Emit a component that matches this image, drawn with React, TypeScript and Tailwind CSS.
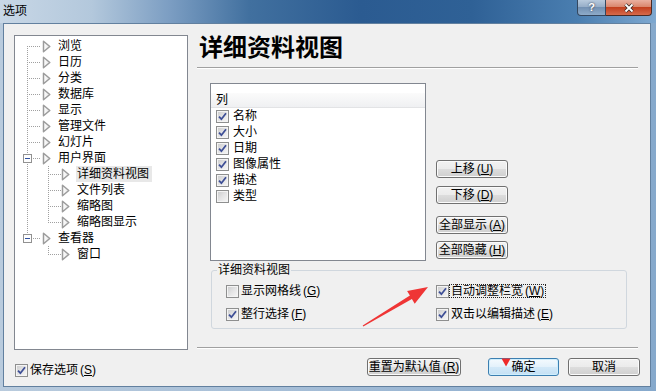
import React from "react";

type Row = {
  text: string;
  level: 0 | 1;
  v?: "full" | "bottom" | "top";
  expander?: boolean;
  rootLine?: boolean;
  child?: "full" | "top";
  selected?: boolean;
};

const rows: Row[] = [
  { text: "浏览", level: 0, v: "bottom" },
  { text: "日历", level: 0, v: "full" },
  { text: "分类", level: 0, v: "full" },
  { text: "数据库", level: 0, v: "full" },
  { text: "显示", level: 0, v: "full" },
  { text: "管理文件", level: 0, v: "full" },
  { text: "幻灯片", level: 0, v: "full" },
  { text: "用户界面", level: 0, v: "full", expander: true },
  { text: "详细资料视图", level: 1, rootLine: true, child: "full", selected: true },
  { text: "文件列表", level: 1, rootLine: true, child: "full" },
  { text: "缩略图", level: 1, rootLine: true, child: "full" },
  { text: "缩略图显示", level: 1, rootLine: true, child: "top" },
  { text: "查看器", level: 0, v: "top", expander: true },
  { text: "窗口", level: 1, rootLine: false, child: "top" },
];

const dot = { stroke: "#a0a0a0", strokeDasharray: "1 1", strokeWidth: 1 };

function VLine({ x, y1, y2 }: { x: number; y1: number; y2: number }) {
  return <line x1={x} x2={x} y1={y1} y2={y2} {...dot} />;
}

function HLine({ x1, x2 }: { x1: number; x2: number }) {
  return <line x1={x1} x2={x2} y1={8.5} y2={8.5} {...dot} />;
}

function Connector({ row }: { row: Row }) {
  if (row.level === 0) {
    return (
      <svg width="26" height="16" className="shrink-0">
        {row.expander ? (
          <>
            <VLine x={12.5} y1={0} y2={4} />
            {row.v === "full" && <VLine x={12.5} y1={14} y2={16} />}
            <rect x="8.5" y="4.5" width="8" height="8" fill="#fdfdfd" stroke="#919191" />
            <line x1="10" x2="15" y1="8.5" y2="8.5" stroke="#2d4f9e" />
            <HLine x1={18} x2={26} />
          </>
        ) : (
          <>
            <VLine x={12.5} y1={row.v === "bottom" ? 8 : 0} y2={row.v === "top" ? 9 : 16} />
            <HLine x1={14} x2={26} />
          </>
        )}
      </svg>
    );
  }
  return (
    <svg width="46" height="16" className="shrink-0">
      {row.rootLine && <VLine x={12.5} y1={0} y2={16} />}
      <VLine x={33.5} y1={0} y2={row.child === "top" ? 9 : 16} />
      <HLine x1={35} x2={46} />
    </svg>
  );
}

function NodeIcon() {
  return (
    <svg width="9" height="13" viewBox="0 0 9 13" className="shrink-0">
      <defs>
        <linearGradient id="tri" x1="0" x2="1" y1="0" y2="0">
          <stop offset="0" stopColor="#ffffff" />
          <stop offset="1" stopColor="#e6e6e6" />
        </linearGradient>
      </defs>
      <path
        d="M1.5 1.2 L7.8 6.5 L1.5 11.8 Z"
        fill="url(#tri)"
        stroke="#9c9c9c"
        strokeWidth="1.5"
        strokeLinejoin="round"
      />
    </svg>
  );
}

function CheckBox({ checked }: { checked?: boolean }) {
  return (
    <span className="flex size-[13px] shrink-0 items-center justify-center border border-[#8e8f8f] bg-[linear-gradient(135deg,#c9cacb_0%,#e4e4e5_50%,#f7f7f7_100%)] shadow-[inset_0_0_0_1px_#f4f4f4]">
      {checked && (
        <svg width="9" height="9" viewBox="0 0 9 9">
          <path d="M1 4.6 L3.4 7.2 L8 1.2" fill="none" stroke="#3e4f96" strokeWidth="1.8" />
        </svg>
      )}
    </span>
  );
}

function Key({ k }: { k: string }) {
  return (
    <span className="ml-[2px]">
      (<span className="underline underline-offset-1">{k}</span>)
    </span>
  );
}

function Button({
  children,
  className,
  focused,
}: {
  children: React.ReactNode;
  className?: string;
  focused?: boolean;
}) {
  return (
    <div
      className={
        "flex h-[18px] shrink-0 items-center justify-center rounded-[3px] border text-[12px] leading-none " +
        (focused
          ? "border-[#3c7fb1] bg-[linear-gradient(#f4fafe_0%,#e3f1fb_50%,#d3e9f8_50%,#c4e0f4_100%)] shadow-[inset_0_0_0_1px_#cfeefd] "
          : "border-[#707070] bg-[linear-gradient(#f2f2f2_0%,#ebebeb_50%,#dddddd_50%,#cfcfcf_100%)] shadow-[inset_0_0_0_1px_#fbfbfb] ") +
        (className ?? "")
      }
    >
      {children}
    </div>
  );
}

function Separator() {
  return <div className="h-[2px] w-[441px] border-t border-[#a0a0a0] bg-white" />;
}

export default function App() {
  return (
    <div className="relative flex h-[391px] w-[656px] flex-col overflow-hidden bg-[linear-gradient(90deg,#b9cbdd_0%,#a3bcd6_50%,#86a9cc_100%)] font-['Liberation_Sans','Noto_Sans_CJK_SC',sans-serif] text-black">
      {/* title bar */}
      <div className="flex h-[23px] shrink-0 bg-[linear-gradient(90deg,#c8d7e6_0%,#b3c8dc_14%,#7b9dc2_26%,#41709f_38%,#2b5b91_55%,#2f6196_72%,#4a7eb0_88%,#7ea8d0_100%)]">
        <span className="pl-[3px] pt-[4px] text-[12px] leading-[14px]">选项</span>
        <div className="ml-auto mr-[4px] flex h-[16px]">
          <div className="flex w-[29px] items-center justify-center rounded-bl-[4px] border border-t-0 border-[#34475f] bg-[linear-gradient(#b8cadd_0%,#93abc6_50%,#7391b3_50%,#8eabc9_100%)]">
            <span className="text-[11px] font-bold leading-none text-white [text-shadow:0_0_2px_#223]">?</span>
          </div>
          <div className="flex w-[46px] items-center justify-center rounded-br-[4px] border border-l-0 border-t-0 border-[#4a2a24] bg-[linear-gradient(#eab0a0_0%,#d88268_50%,#c3401f_50%,#d66a4b_100%)]">
            <svg width="12" height="10" viewBox="0 0 12 10">
              <path d="M2.5 1.5 L9.5 8.5 M9.5 1.5 L2.5 8.5" stroke="#3a2a28" strokeWidth="3.4" />
              <path d="M2.5 1.5 L9.5 8.5 M9.5 1.5 L2.5 8.5" stroke="#ffffff" strokeWidth="1.8" />
            </svg>
          </div>
        </div>
      </div>

      {/* client area */}
      <div className="mb-[4px] ml-[3px] mr-[5px] flex flex-1 flex-col border border-[#62809f] bg-[#f0f0f0] text-[12px]">
        <div className="flex pl-[10px] pt-[11px]">
          {/* tree */}
          <div className="h-[315px] w-[174px] shrink-0 border border-[#828790] bg-white pt-[2px]">
            {rows.map((row) => (
              <div key={row.text} className="flex h-[16px] items-center">
                <Connector row={row} />
                <span className={row.level === 0 ? "ml-[1px] flex" : "flex"}>
                  <NodeIcon />
                </span>
                <span
                  className={
                    "h-[16px] pl-[1px] pr-[3px] leading-[16px] " +
                    (row.selected ? "ml-[6px] bg-[#e8e8e8]" : "ml-[6px]")
                  }
                >
                  {row.text}
                </span>
              </div>
            ))}
          </div>

          {/* right panel */}
          <div className="ml-[9px] flex w-[441px] flex-col">
            <div className="mt-[1px] h-[24px] pl-[2px] text-[24px] font-bold leading-[24px]">
              详细资料视图
            </div>
            <div className="mt-[7px]">
              <Separator />
            </div>
            <div className="mt-[14px] flex">
              <div className="ml-[13px] h-[178px] w-[216px] border border-[#828790] bg-white pt-[9px]">
                <div className="h-[15px] border-b border-[#e2e3e5] bg-[linear-gradient(#fbfbfb,#eff0f2)] pl-[5px] leading-[14px]">
                  列
                </div>
                {[
                  ["名称", true],
                  ["大小", true],
                  ["日期", true],
                  ["图像属性", true],
                  ["描述", true],
                  ["类型", false],
                ].map(([label, on]) => (
                  <div key={label as string} className="flex h-[16px] items-center pl-[5px]">
                    <CheckBox checked={on as boolean} />
                    <span className="ml-[4px] leading-[16px]">{label as string}</span>
                  </div>
                ))}
              </div>
              <div className="ml-[10px] flex w-[72px] flex-col pt-[77px]">
                <Button className="w-[72px]">
                  上移<Key k="U" />
                </Button>
                <Button className="mt-[8px] w-[72px]">
                  下移<Key k="D" />
                </Button>
                <Button className="mt-[12px] w-[72px]">
                  全部显示<Key k="A" />
                </Button>
                <Button className="mt-[7px] w-[72px]">
                  全部隐藏<Key k="H" />
                </Button>
              </div>
            </div>

            <fieldset className="ml-[14px] mt-[2px] w-[416px] rounded-[3px] border border-[#d0d7de] px-0 pb-[6px] pt-[6px]">
              <legend className="ml-[5px] px-[1px] leading-[14px]">详细资料视图</legend>
              <div className="grid grid-cols-[210px_1fr] gap-y-[7px] pl-[14px]">
                <div className="flex h-[16px] items-center">
                  <CheckBox />
                  <span className="border border-transparent px-[1px] leading-[12px]">
                    显示网格线<Key k="G" />
                  </span>
                </div>
                <div className="flex h-[16px] items-center">
                  <CheckBox checked />
                  <span className="border border-dotted border-[#222] px-[1px] leading-[12px]">
                    自动调整栏宽<Key k="W" />
                  </span>
                </div>
                <div className="flex h-[16px] items-center">
                  <CheckBox checked />
                  <span className="border border-transparent px-[1px] leading-[12px]">
                    整行选择<Key k="F" />
                  </span>
                </div>
                <div className="flex h-[16px] items-center">
                  <CheckBox checked />
                  <span className="border border-transparent px-[1px] leading-[12px]">
                    双击以编辑描述<Key k="E" />
                  </span>
                </div>
              </div>
            </fieldset>
            <div className="mt-[18px]">
              <Separator />
            </div>
          </div>
        </div>

        {/* bottom row */}
        <div className="mt-[8px] flex items-start pl-[11px] pr-[10px]">
          <div className="mt-[6px] flex h-[13px] items-center">
            <CheckBox checked />
            <span className="ml-[2px] leading-[13px]">
              保存选项<Key k="S" />
            </span>
          </div>
          <Button className="ml-auto w-[94px]">
            重置为默认值<Key k="R" />
          </Button>
          <Button focused className="ml-[27px] w-[71px]">
            确定
          </Button>
          <Button className="ml-[9px] w-[72px]">取消</Button>
        </div>
      </div>

      {/* annotation overlay */}
      <svg className="pointer-events-none absolute left-0 top-0" width="656" height="391">
        <polygon
          points="362.7,325.5 409.9,295.6 407.1,290.9 428,287 414.7,303.7 411.9,299 363.3,326.5"
          fill="#ef3535"
        />
        <polygon points="501.5,358.5 510.5,358.5 506,366.5" fill="#ee2a2a" />
      </svg>
    </div>
  );
}
